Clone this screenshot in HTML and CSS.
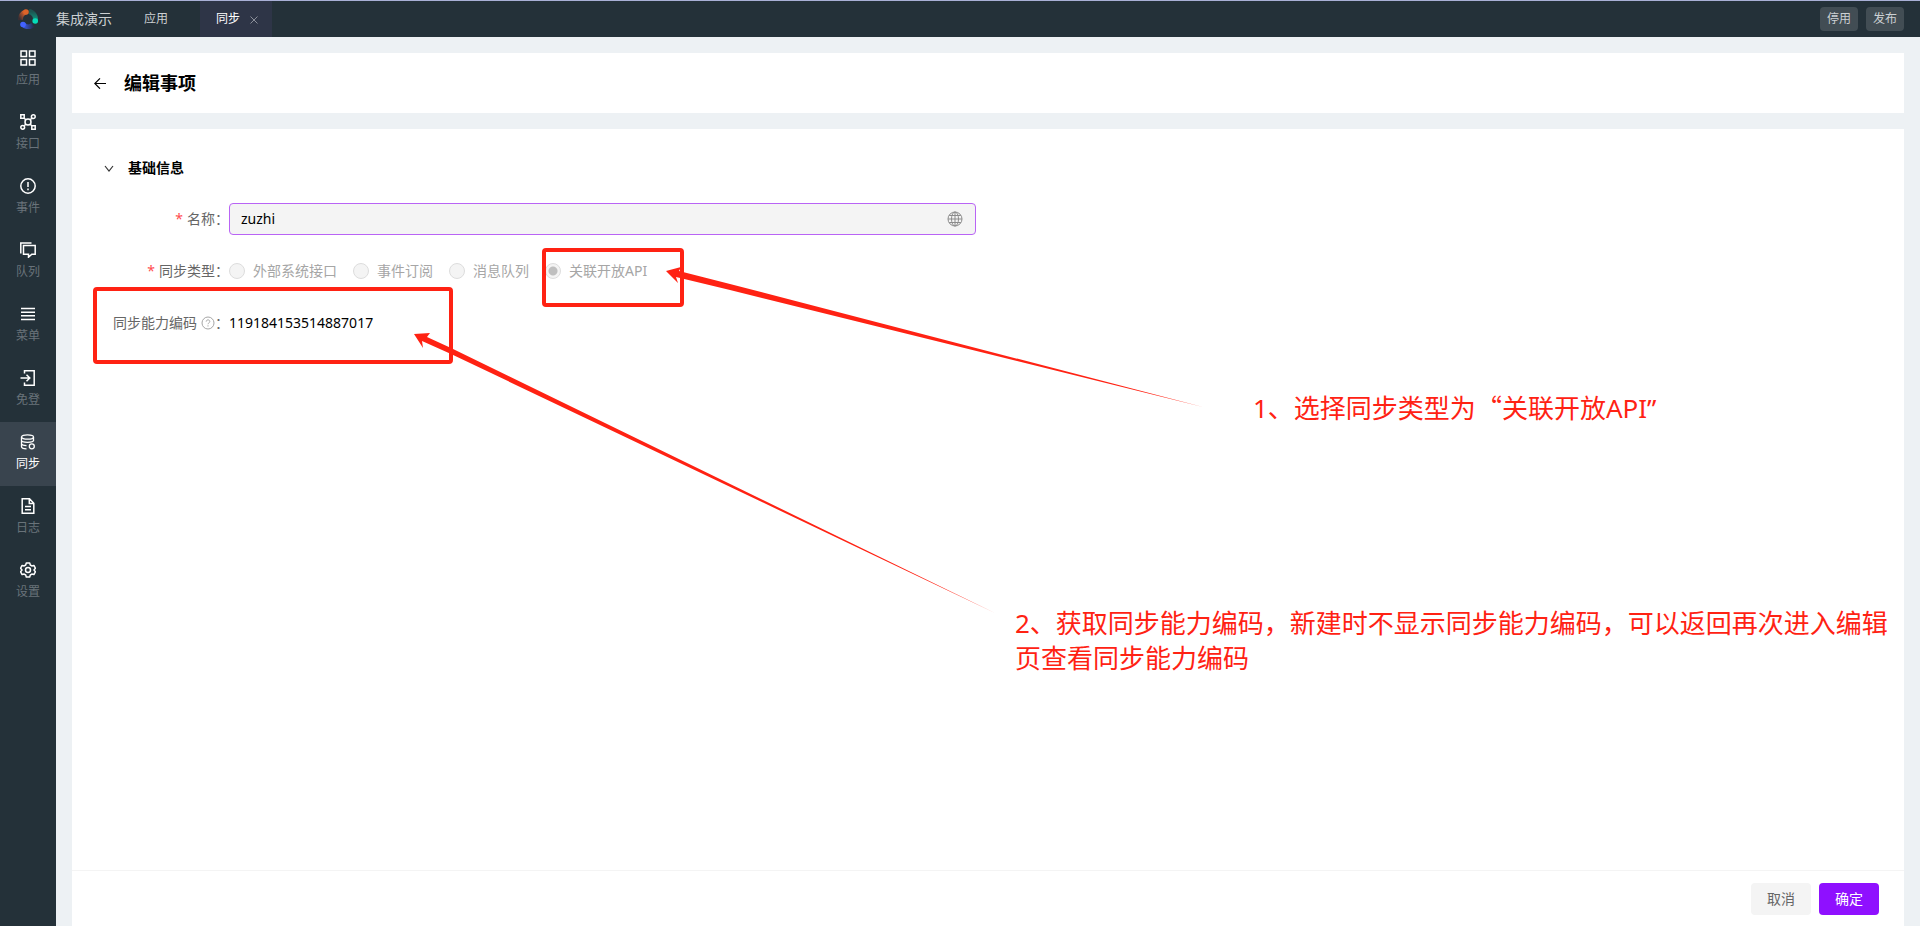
FILE: index.html
```html
<!DOCTYPE html>
<html lang="zh-CN">
<head>
    <meta charset="UTF-8">
    <meta name="viewport" content="width=device-width, initial-scale=1.0">
    <title>编辑事项</title>
    <link rel="stylesheet" href="styles.css">
</head>
<body>

    <!-- 顶部栏 -->
    <header class="topbar">
        <svg class="logo" viewBox="0 0 20 20" width="20" height="20">
            <defs>
                <linearGradient id="orange" x1="1" y1="0" x2="0" y2="1"><stop offset="0.3" stop-color="#c95a2b"/><stop offset="1" stop-color="#3c2f33"/></linearGradient>
                <linearGradient id="green" x1="0" y1="0" x2="0" y2="1"><stop offset="0" stop-color="#1d5551"/><stop offset="1" stop-color="#0f9c84"/></linearGradient>
                <linearGradient id="blue" x1="0" y1="0" x2="1" y2="0"><stop offset="0" stop-color="#3a5cf0"/><stop offset="1" stop-color="#28304f"/></linearGradient>
            </defs>
            <g fill="none" stroke-width="5">
                <path d="M8 2.8A7.5 7.5 0 0 0 2.6 11" stroke="url(#orange)"/>
                <path d="M11 2.6A7.5 7.5 0 0 1 17.2 12" stroke="url(#green)"/>
                <path d="M5 15.5A7.5 7.5 0 0 0 15 16" stroke="url(#blue)"/>
            </g>
            <circle cx="8" cy="3" r="2.8" fill="#dd6429"/>
            <circle cx="17.2" cy="12" r="2.8" fill="#05dcba"/>
            <circle cx="5" cy="15.5" r="2.8" fill="#4262ff"/>
        </svg>
        <span class="brand">集成演示</span>
        <nav class="tabs">
            <a class="tab" href="#">应用</a>
            <a class="tab active" href="#">同步
                <svg viewBox="0 0 8 8" width="8" height="8"><path d="M0.5 0.5l7 7M7.5 0.5l-7 7" stroke="#8b8f99" fill="none"/></svg>
            </a>
        </nav>
        <div class="top-actions">
            <button type="button" class="top-btn">停用</button>
            <button type="button" class="top-btn">发布</button>
        </div>
    </header>

    <div class="layout">
        <!-- 侧边菜单 -->
        <nav class="sidebar">
            <a class="side-item" href="#">
                <svg viewBox="0 0 16 16"><path d="M1 1h5.5v5.5H1zM9.5 1H15v5.5H9.5zM1 9.5h5.5V15H1zM9.5 9.5H15V15H9.5z"/></svg>
                <span>应用</span>
            </a>
            <a class="side-item" href="#">
                <svg viewBox="0 0 16 16"><path d="M.8.8h3.4v3.4H.8zM11.8 11.8h3.4v3.4h-3.4zM4.2 4.2l1.6 1.6M10.2 10.2l1.6 1.6M11.8 4.2l-1.6 1.6M5.8 10.2l-1.6 1.6"/><circle cx="8" cy="8" r="3"/><circle cx="13.3" cy="2.7" r="1.9"/><circle cx="2.7" cy="13.3" r="1.9"/></svg>
                <span>接口</span>
            </a>
            <a class="side-item" href="#">
                <svg viewBox="0 0 16 16"><circle cx="8" cy="8" r="7.2"/><path d="M8 4v5M8 10.5v1.7"/></svg>
                <span>事件</span>
            </a>
            <a class="side-item" href="#">
                <svg viewBox="0 0 16 16"><path d="M3.5 3.5h11.7v8.7h-3.4l-3.3 3v-3h-5zM.8 11.5V.9h10.7"/></svg>
                <span>队列</span>
            </a>
            <a class="side-item" href="#">
                <svg viewBox="0 0 16 16"><path d="M1 2.5h14M1 6.2h14M1 9.8h14M1 13.5h14"/></svg>
                <span>菜单</span>
            </a>
            <a class="side-item" href="#">
                <svg viewBox="0 0 16 16"><path d="M4.5 3.5V.8h9.7v14.4H4.5v-2.7M.5 8h9.3M6.5 4.7L9.8 8l-3.3 3.3"/></svg>
                <span>免登</span>
            </a>
            <a class="side-item active" href="#">
                <svg viewBox="0 0 16 16"><g stroke-width="1.3"><ellipse cx="7.5" cy="3" rx="6" ry="2.2"/><path d="M1.5 3v9.6c0 1.2 2 2.2 5 2.2M1.5 6.2c0 1.2 2.5 2.1 6 2.1s6-.9 6-2.1M1.5 9.6c0 1.1 2 1.9 5 2M13.5 3v4"/><circle cx="11.8" cy="12.3" r="2.5"/></g></svg>
                <span>同步</span>
            </a>
            <a class="side-item" href="#">
                <svg viewBox="0 0 16 16"><path d="M2.2.8h7.3l4.3 4.4v10H2.2zM9.3 1v4.4h4.4M5 8.5h6M5 11.8h6"/></svg>
                <span>日志</span>
            </a>
            <a class="side-item" href="#">
                <svg viewBox="0 0 16 16"><path d="M6.3 1h3.4l.6 2 1.5.9 2.1-.5 1.5 2.8L14 7.9v.2l1.4 1.7-1.5 2.8-2.1-.5-1.5.9-.6 2H6.3l-.6-2-1.5-.9-2.1.5L.6 9.8 2 8.100v-.2L.6 6.200l1.500-2.800 2.100.5L5.700 3z" stroke-linejoin="round"/><circle cx="8" cy="8" r="2.5"/></svg>
                <span>设置</span>
            </a>
        </nav>

        <main class="main">
            <section class="page-head">
                <a class="back" href="#" aria-label="返回">
                    <svg viewBox="0 0 12 12" width="12" height="12"><path d="M12 6.5H1M6 1.3L.8 6.5 6 11.7" stroke="#000" stroke-width="1.2" fill="none"/></svg>
                </a>
                <h1>编辑事项</h1>
            </section>

            <section class="panel">
                <h2 class="section-title">
                    <svg viewBox="0 0 10 10" width="10" height="10"><path d="M1 3l4 5 4-5" stroke="#333" stroke-width="1.2" fill="none"/></svg>
                    基础信息
                </h2>

                <form class="form">
                    <div class="row">
                        <label class="label" for="name"><i>*</i>名称：</label>
                        <div class="input-box">
                            <input type="text" id="name" value="zuzhi">
                            <svg viewBox="0 0 16 16" width="16" height="16" fill="none" stroke="#8c8c8c"><circle cx="8" cy="8" r="7"/><ellipse cx="8" cy="8" rx="3.5" ry="7"/><path d="M8 1v14M1 8h14M2.2 4.5h11.6M2.2 11.5h11.6"/></svg>
                        </div>
                    </div>
                    <div class="row">
                        <span class="label" id="type-label"><i>*</i>同步类型：</span>
                        <div class="radios" role="radiogroup" aria-labelledby="type-label">
                            <label><input type="radio" name="type" disabled>外部系统接口</label>
                            <label><input type="radio" name="type" disabled>事件订阅</label>
                            <label><input type="radio" name="type" disabled>消息队列</label>
                            <label><input type="radio" name="type" disabled checked>关联开放API</label>
                        </div>
                    </div>
                    <div class="row">
                        <span class="label">同步能力编码
                            <svg viewBox="0 0 14 14" width="14" height="14" fill="none" stroke="#a6a6a6"><circle cx="7" cy="7" r="6"/><path d="M5.2 5.6c0-2.3 3.6-2.3 3.6-.1 0 1.4-1.8 1.4-1.8 2.7M7 9.3v1.2"/></svg>：</span>
                        <span class="code">119184153514887017</span>
                    </div>
                </form>

                <footer class="panel-foot">
                    <button type="button" class="btn">取消</button>
                    <button type="button" class="btn primary">确定</button>
                </footer>
            </section>
        </main>
    </div>

    <!-- 标注层 -->
    <div class="notes">
        <div class="mark mark-type"></div>
        <div class="mark mark-code"></div>
        <svg class="arrows" width="1920" height="926" viewBox="0 0 1920 926">
            <path d="M666 271L681 267L679 271L730 284L1203 407L730 290L676 277L678 283Z"/>
            <path d="M414 334L430 333L427 337L451 348L995 613L451 354L422 341L423 348Z"/>
        </svg>
        <p class="note note-type">1、选择同步类型为<span class="quote">“</span>关联开放API”</p>
        <p class="note note-code">2、获取同步能力编码，新建时不显示同步能力编码，可以返回再次进入编辑页查看同步能力编码</p>
    </div>

</body>
</html>
```
FILE: styles.css
```css
* { box-sizing: border-box; }

body {
    margin: 0;
    min-height: 100vh;
    display: flex;
    flex-direction: column;
    position: relative;
    font-family: "Noto Sans", "Noto Sans CJK SC", sans-serif;
    font-size: 14px;
    line-height: 22px;
    color: #000;
    background: #edf1f4;
}

a { color: inherit; text-decoration: none; }
button, input { font: inherit; }

/* 顶部栏 */
.topbar {
    height: 37px;
    display: flex;
    align-items: center;
    padding: 0 16px 0 18px;
    background: #243139;
    border-top: 1px solid #a9b0d6;
    color: #ccd0d3;
}

.brand { margin-left: 18px; }
.tabs { display: flex; height: 100%; margin-left: 16px; font-size: 12px; }

.tab {
    display: flex;
    align-items: center;
    gap: 10px;
    padding: 0 16px;
    margin-right: 16px;
}

.tab.active { background: #2e3547; color: #fff; padding: 0 14px 0 16px; }
.tab svg { margin-top: 2px; }
.top-actions { display: flex; gap: 8px; margin-left: auto; }

.top-btn {
    width: 38px;
    height: 24px;
    padding: 0;
    border: none;
    border-radius: 4px;
    background: #424d54;
    color: #ccd0d3;
    font-size: 12px;
}

/* 侧边菜单 */
.layout { flex: 1; display: flex; }
.sidebar { width: 56px; padding-top: 1px; background: #243139; }

.side-item {
    height: 64px;
    display: flex;
    flex-direction: column;
    align-items: center;
    gap: 3px;
    padding-top: 12px;
    font-size: 12px;
    color: #69737a;
}

.side-item svg {
    width: 16px;
    height: 16px;
    fill: none;
    stroke: #fff;
    stroke-width: 1.5;
}

.side-item.active { background: #39444e; color: #fff; }

/* 内容区 */
.main {
    flex: 1;
    display: flex;
    flex-direction: column;
    gap: 16px;
    padding: 16px 16px 0;
}

.page-head {
    height: 60px;
    display: flex;
    align-items: center;
    gap: 18px;
    padding: 0 22px;
    background: #fff;
}

.back { display: flex; }
h1 { margin: 0; font-size: 18px; font-weight: 600; }

.panel {
    flex: 1;
    display: flex;
    flex-direction: column;
    background: #fff;
}

.section-title {
    display: flex;
    align-items: center;
    gap: 14px;
    margin: 28px 0 0 32px;
    font-size: 14px;
    font-weight: 600;
}

/* 表单 */
.form {
    display: flex;
    flex-direction: column;
    gap: 20px;
    padding: 24px 32px;
}

.row { display: flex; align-items: center; height: 32px; }

.label {
    width: 125px;
    display: flex;
    align-items: center;
    justify-content: flex-end;
    white-space: nowrap;
    color: #666;
}

.label i { margin-right: 4px; font-style: normal; color: #ff4d4f; }
.label svg { margin-left: 4px; }

.input-box {
    width: 42.25%;
    height: 32px;
    display: flex;
    align-items: center;
    padding: 0 12px 0 11px;
    border: 1px solid #b964f5;
    border-radius: 4px;
    background: #f4f4f4;
}

.input-box input {
    flex: 1;
    padding: 0;
    border: none;
    outline: none;
    background: none;
    color: #000;
}

.radios { display: flex; gap: 16px; color: #a6a6a6; }
.radios label { display: flex; align-items: center; gap: 8px; }

.radios input {
    appearance: none;
    width: 16px;
    height: 16px;
    margin: 0;
    border: 1px solid #ddd;
    border-radius: 50%;
    background: #f4f4f4;
}

.radios input:checked { background: radial-gradient(circle, #bfbfbf 4px, #f4f4f4 5px); }

.panel-foot {
    height: 56px;
    display: flex;
    align-items: center;
    justify-content: flex-end;
    gap: 8px;
    margin-top: auto;
    padding: 0 25px;
    border-top: 1px solid #f4f4f4;
}

.btn {
    width: 60px;
    height: 32px;
    padding: 0;
    border: none;
    border-radius: 4px;
    background: #f4f4f4;
    color: #666;
}

.btn.primary { background: #8f10ff; color: #fff; }

/* 标注 */
.notes { position: absolute; inset: 0; overflow: hidden; pointer-events: none; }
.mark { position: absolute; border: 4px solid #ff2213; border-radius: 4px; }
.mark-type { left: 542px; top: 248px; width: 142px; height: 59px; }
.mark-code { left: 93px; top: 287px; width: 360px; height: 77px; }
.arrows { position: absolute; left: 0; top: 0; fill: #ff2213; }

.note {
    position: absolute;
    margin: 0;
    font-size: 26px;
    line-height: 35px;
    color: #ff2213;
}

.note-type { left: 1253px; top: 391px; }
.note-code { left: 1015px; top: 606px; width: 890px; }
.quote { font-family: "Noto Sans CJK SC", sans-serif; line-height: 0; }
```
